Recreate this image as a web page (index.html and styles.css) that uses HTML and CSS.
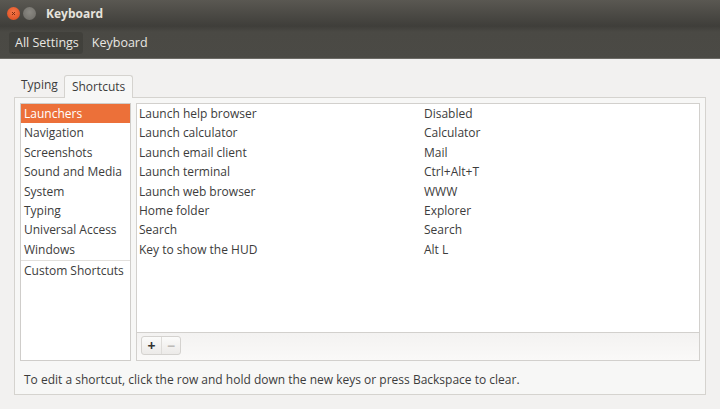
FILE: index.html
```html
<!DOCTYPE html>
<html>
<head>
<meta charset="utf-8">
<link rel="stylesheet" href="styles.css">
</head>
<body>
<div class="window">
  <header class="header">
    <div class="titlebar">
      <span class="btn close"><svg width="12" height="12" viewBox="0 0 12 12"><path d="M4 4 L8 8 M8 4 L4 8" stroke="#7a2a10" stroke-width="1.3"/></svg></span>
      <span class="btn min"></span>
      <span class="title">Keyboard</span>
    </div>
    <div class="toolbar">
      <span class="crumb">All Settings</span>
      <span class="crumb">Keyboard</span>
    </div>
  </header>
  <main class="content">
    <div class="tabs">
      <span class="tab">Typing</span>
      <span class="tab active">Shortcuts</span>
    </div>
    <div class="notebook">
      <div class="panes">
        <ul class="cats">
          <li class="sel">Launchers</li>
          <li>Navigation</li>
          <li>Screenshots</li>
          <li>Sound and Media</li>
          <li>System</li>
          <li>Typing</li>
          <li>Universal Access</li>
          <li>Windows</li>
          <li class="custom">Custom Shortcuts</li>
        </ul>
        <div class="right">
          <div class="list">
            <div class="row"><span>Launch help browser</span><span>Disabled</span></div>
            <div class="row"><span>Launch calculator</span><span>Calculator</span></div>
            <div class="row"><span>Launch email client</span><span>Mail</span></div>
            <div class="row"><span>Launch terminal</span><span>Ctrl+Alt+T</span></div>
            <div class="row"><span>Launch web browser</span><span>WWW</span></div>
            <div class="row"><span>Home folder</span><span>Explorer</span></div>
            <div class="row"><span>Search</span><span>Search</span></div>
            <div class="row"><span>Key to show the HUD</span><span>Alt L</span></div>
          </div>
          <div class="listbar">
            <div class="pm"><span class="pmb">+</span><span class="pmb dim">−</span></div>
          </div>
        </div>
      </div>
      <p class="hint">To edit a shortcut, click the row and hold down the new keys or press Backspace to clear.</p>
    </div>
  </main>
</div>
</body>
</html>
```
FILE: styles.css
```css
* { box-sizing: border-box; }
html, body { margin: 0; padding: 0; }
body {
  width: 720px; height: 409px; overflow: hidden;
  font-family: "Open Sans", "DejaVu Sans", sans-serif;
  font-size: 12px;
  color: #3c3c3c;
  background: #f2f1f0;
}
.window { display: flex; flex-direction: column; height: 409px; }
.header {
  height: 59px;
  background: linear-gradient(#5a5852 0%, #3f3e3a 45%, #4a4944 55%, #4b4a45 100%);
  border-bottom: 1px solid #6b6a65;
  display: flex; flex-direction: column;
}
.titlebar { height: 27px; display: flex; align-items: center; padding-left: 7px; }
.btn { width: 13px; height: 13px; border-radius: 50%; display: inline-flex; align-items: center; justify-content: center; margin-right: 3px; }
.btn svg { width: 9px; height: 9px; }
.close { background: radial-gradient(circle at 50% 40%, #f7794a, #d9471b); }
.min { background: radial-gradient(circle at 50% 40%, #8b8983, #6c6a65); }
.title { color: #e6e3dd; font-weight: 700; font-size: 12px; margin-left: 7px; }
.toolbar { height: 31px; display: flex; align-items: center; padding-left: 9px; gap: 3px; }
.crumb { color: #e9e7e2; font-size: 12.5px; padding: 2px 3px 3px 6px; border-radius: 3px; }
.crumb:first-child { background: rgba(0,0,0,0.12); padding: 2px 4px 3px 6px; }
.content { flex: 1; padding: 15px 14px 14px 14px; display: flex; flex-direction: column; }
.tabs { display: flex; height: 23px; align-items: flex-end; padding-left: 3px; }
.tab { padding: 0 4px 3px 4px; color: #3c3c3c; font-size: 12px; line-height: 18px; }
.tab.active { background: #f7f7f6; border: 1px solid #d5d3cf; border-bottom: none; border-radius: 3px 3px 0 0; padding: 2px 7px 2px 7px; margin-left: 2px; position: relative; top: 1px; }
.notebook { flex: 1; border: 1px solid #d5d3cf; background: #f7f7f6; padding: 5px 5px 0 5px; display: flex; flex-direction: column; }
.panes { display: flex; gap: 5px; height: 258px; }
.cats { list-style: none; margin: 0; padding: 0; width: 111px; background: #fff; border: 1px solid #cfcdca; }
.cats li { height: 19.4px; line-height: 19.4px; padding-left: 3px; white-space: nowrap; }
.cats li.sel { background: #ec7039; color: #fff; }
.cats li.custom { border-top: 1px solid #e2e0dd; margin-top: 1px; height: 20px; line-height: 19px; }
.right { flex: 1; border: 1px solid #d2d0cd; display: flex; flex-direction: column; background: #f5f4f3; }
.list { flex: 1; background: #fff; border-bottom: 1px solid #d2d0cd; }
.row { display: grid; grid-template-columns: 285px 1fr; height: 19.4px; line-height: 19.4px; padding-left: 2px; white-space: nowrap; }
.listbar { height: 27px; padding: 3px 4px; background: linear-gradient(#f3f2f1, #faf9f8); }
.pm { display: inline-flex; border: 1px solid #d4d2cf; border-radius: 3px; background: linear-gradient(#fbfbfa, #eceae8); height: 19px; }
.pmb { width: 19px; text-align: center; line-height: 17px; font-size: 14px; font-weight: 700; color: #333; }
.pmb.dim { color: #bdbbb8; border-left: 1px solid #dedcd9; }
.hint { margin: 10px 0 0 4px; font-size: 12px; color: #3c3c3c; white-space: nowrap; }
```
